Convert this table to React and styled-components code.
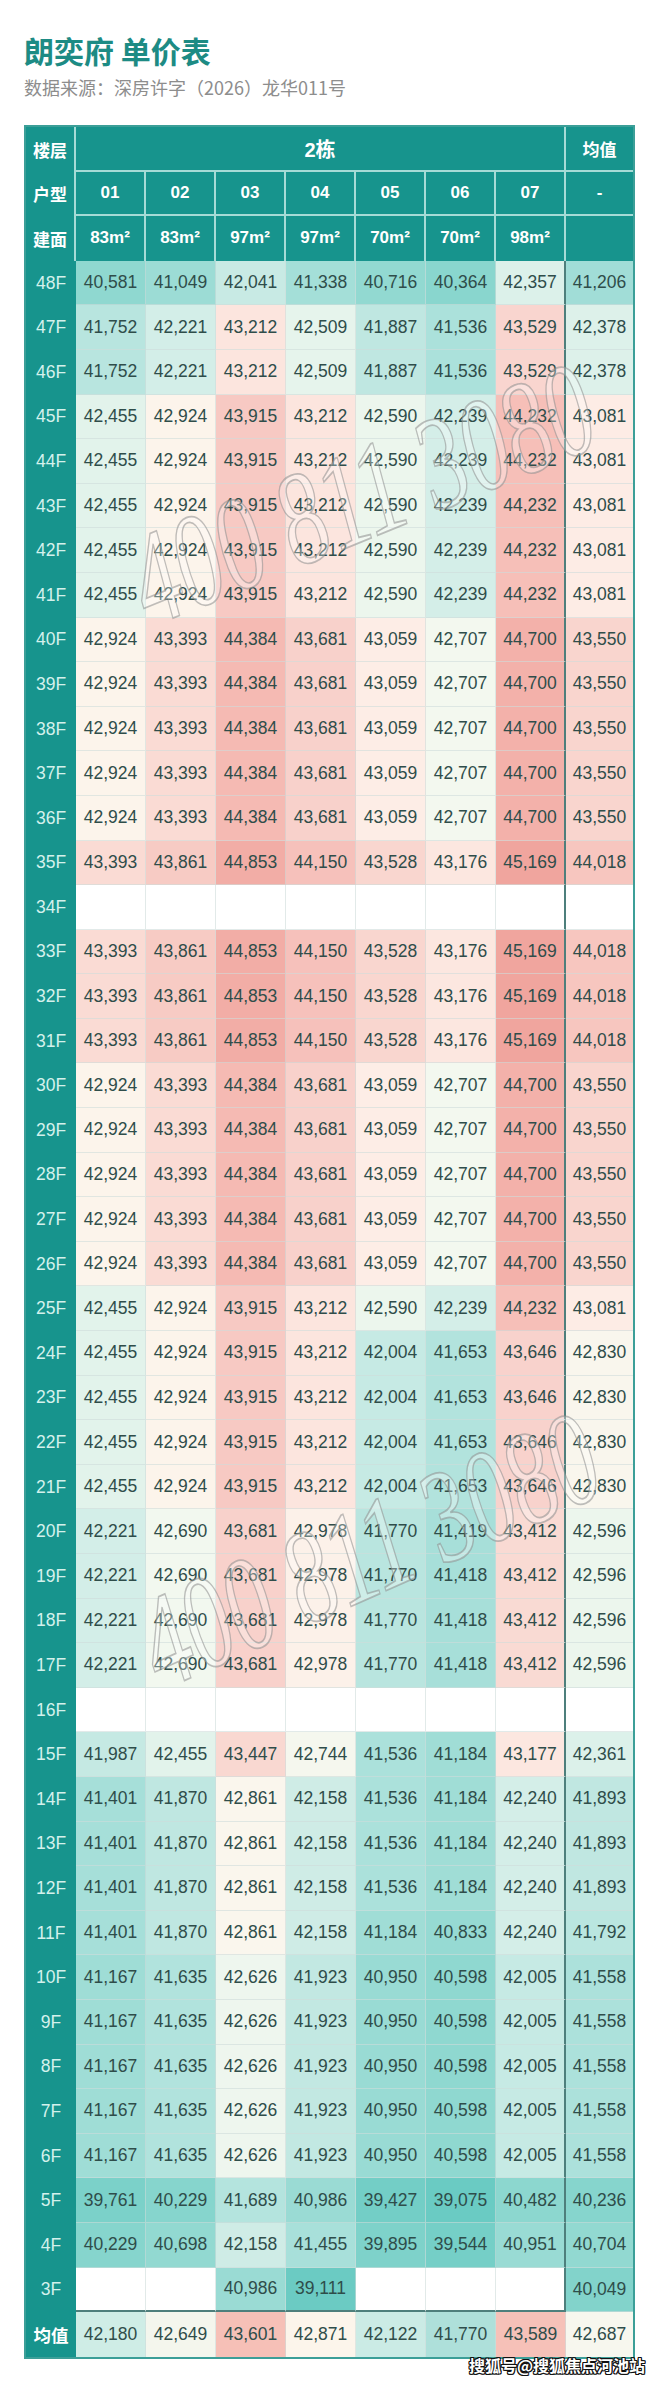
import styled, { createGlobalStyle } from 'styled-components';

// --- colour scale (value -> cell colour) ---
const MAIN_STOPS = [
  [39075, '#6acbc3'],
  [40600, '#8fd8d0'],
  [41500, '#a9e0da'],
  [42240, '#d4eee8'],
  [42700, '#f3f8ef'],
  [42900, '#fcf5ec'],
  [43100, '#fdebe4'],
  [43450, '#f9d8d1'],
  [43700, '#f8d0ca'],
  [44400, '#f5b9b2'],
  [44700, '#f3b1aa'],
  [45169, '#f0a59e'],
];

const AVG_STOPS = [
  [41770, '#aee0da'],
  [42150, '#cdece6'],
  [42700, '#f8f7ee'],
  [42900, '#fdf5eb'],
  [43601, '#f6c0b7'],
];

const hex = (h) => [1, 3, 5].map((i) => parseInt(h.slice(i, i + 2), 16));

const scale = (v, stops) => {
  if (v <= stops[0][0]) return stops[0][1];
  for (let i = 1; i < stops.length; i++) {
    const [v1, c1] = stops[i];
    if (v <= v1) {
      const [v0, c0] = stops[i - 1];
      const t = (v - v0) / (v1 - v0);
      const a = hex(c0);
      const b = hex(c1);
      return `rgb(${a.map((x, k) => Math.round(x + (b[k] - x) * t)).join(',')})`;
    }
  }
  return stops[stops.length - 1][1];
};

// --- data ---
const R47 = [[41752, 42221, 43212, 42509, 41887, 41536, 43529], 42378];
const R45 = [[42455, 42924, 43915, 43212, 42590, 42239, 44232], 43081];
const R40 = [[42924, 43393, 44384, 43681, 43059, 42707, 44700], 43550];
const R35 = [[43393, 43861, 44853, 44150, 43528, 43176, 45169], 44018];
const R24 = [[42455, 42924, 43915, 43212, 42004, 41653, 43646], 42830];
const R20 = [[42221, 42690, 43681, 42978, 41770, 41418, 43412], 42596];
const R14 = [[41401, 41870, 42861, 42158, 41536, 41184, 42240], 41893];
const R10 = [[41167, 41635, 42626, 41923, 40950, 40598, 42005], 41558];
const EMPTY = [null, null];

const floors = [
  [48, [[40581, 41049, 42041, 41338, 40716, 40364, 42357], 41206]],
  [47, R47], [46, R47],
  [45, R45], [44, R45], [43, R45], [42, R45], [41, R45],
  [40, R40], [39, R40], [38, R40], [37, R40], [36, R40],
  [35, R35], [34, EMPTY], [33, R35], [32, R35], [31, R35],
  [30, R40], [29, R40], [28, R40], [27, R40], [26, R40],
  [25, R45],
  [24, R24], [23, R24], [22, R24], [21, R24],
  [20, [[42221, 42690, 43681, 42978, 41770, 41419, 43412], 42596]],
  [19, R20], [18, R20], [17, R20],
  [16, EMPTY],
  [15, [[41987, 42455, 43447, 42744, 41536, 41184, 43177], 42361]],
  [14, R14], [13, R14], [12, R14],
  [11, [[41401, 41870, 42861, 42158, 41184, 40833, 42240], 41792]],
  [10, R10], [9, R10], [8, R10], [7, R10], [6, R10],
  [5, [[39761, 40229, 41689, 40986, 39427, 39075, 40482], 40236]],
  [4, [[40229, 40698, 42158, 41455, 39895, 39544, 40951], 40704]],
  [3, [[null, null, 40986, 39111, null, null, null], 40049]],
];

const totals = [[42180, 42649, 43601, 42871, 42122, 41770, 43589], 42687];

const units = ['01', '02', '03', '04', '05', '06', '07'];
const areas = ['83m²', '83m²', '97m²', '97m²', '70m²', '70m²', '98m²'];

const fmt = (n) => n.toLocaleString('en-US');

// --- styles ---
const GlobalStyle = createGlobalStyle`
  html, body {
    margin: 0;
    padding: 0;
    background: #fff;
  }
  body {
    font-family: "Liberation Sans", "Noto Sans CJK SC", sans-serif;
  }
`;

const Page = styled.div`
  position: relative;
  width: 660px;
  height: 2384px;
  box-sizing: border-box;
  padding: 32px 0 0 24px;
  overflow: hidden;
  background: #fff;
`;

const Title = styled.h1`
  margin: 0;
  font-family: "Noto Sans CJK SC", sans-serif;
  font-size: 30px;
  line-height: 36px;
  font-weight: 700;
  color: #1d8b84;
`;

const Source = styled.p`
  margin: 7px 0 0;
  font-family: "Noto Sans CJK SC", sans-serif;
  font-size: 18px;
  line-height: 24px;
  color: #8d8d8d;
`;

const Sheet = styled.div`
  margin-top: 26px;
  width: 611px;
  box-sizing: border-box;
  border: 2px solid #3c9f98;
  display: grid;
  grid-template-columns: 50px repeat(7, 70px) 67px;
  grid-auto-rows: 44.6px;
  background: #fff;
`;

const LINE = '2px solid #a6dbd6';

const Head = styled.div`
  grid-column: ${(p) => (p.$span ? `span ${p.$span}` : 'auto')};
  display: flex;
  align-items: center;
  justify-content: center;
  box-sizing: border-box;
  background: #17948d;
  color: #fff;
  font-family: "Liberation Sans", "Noto Sans CJK SC", sans-serif;
  font-weight: 700;
  font-size: ${(p) => (p.$big ? 20 : 17)}px;
  border-right: ${(p) => (p.$open ? 'none' : LINE)};
  border-bottom: ${(p) => (p.$under ? LINE : 'none')};
`;

const Floor = styled.div`
  display: flex;
  align-items: center;
  justify-content: center;
  background: #17948d;
  color: ${(p) => (p.$strong ? '#fff' : '#d4f1ec')};
  font-weight: ${(p) => (p.$strong ? 700 : 400)};
  font-size: 17.5px;
`;

const GRID = '1px solid rgba(206, 220, 218, 0.6)';
const DARK = '2px solid #4e7f7c';

const Cell = styled.div`
  display: flex;
  align-items: center;
  justify-content: center;
  box-sizing: border-box;
  background: ${(p) => p.$bg};
  color: #2f4d4a;
  font-size: 17.5px;
  border-right: ${(p) => (p.$divide ? DARK : p.$end ? 'none' : GRID)};
  border-bottom: ${(p) => (p.$close ? DARK : p.$bottom ? 'none' : GRID)};
`;

const Stamp = styled.div`
  position: absolute;
  left: ${(p) => p.$x}px;
  top: ${(p) => p.$y}px;
  transform: translate(-50%, -50%) rotate(${(p) => p.$angle}deg) scale(0.92, 1.35);
  font-family: "Liberation Serif", serif;
  font-style: italic;
  font-size: 98px;
  line-height: 1;
  white-space: nowrap;
  color: rgba(255, 255, 255, 0.3);
  -webkit-text-stroke: 1.3px rgba(140, 140, 140, 0.55);
  pointer-events: none;
`;

const Credit = styled.div`
  position: absolute;
  right: 15px;
  top: 2354px;
  font-family: "Noto Sans CJK SC", sans-serif;
  font-weight: 700;
  font-size: 16px;
  line-height: 22px;
  color: #fff;
  text-shadow:
    1px 1px 0 #111, -1px -1px 0 #111, 1px -1px 0 #111, -1px 1px 0 #111,
    0 1px 0 #111, 1px 0 0 #111, 0 -1px 0 #111, -1px 0 0 #111;
`;

const PriceRow = ({ label, values, avg, last, strong, stops }) => (
  <>
    <Floor $strong={strong}>{label}</Floor>
    {(values || Array(7).fill(null)).map((v, i) => (
      <Cell
        key={i}
        $bg={v == null ? '#fff' : scale(v, stops)}
        $divide={i === 6 && !strong}
        $close={last}
        $bottom={strong}
      >
        {v == null ? '' : fmt(v)}
      </Cell>
    ))}
    <Cell $bg={avg == null ? '#fff' : scale(avg, stops)} $end $bottom={strong}>
      {avg == null ? '' : fmt(avg)}
    </Cell>
  </>
);

export default function App() {
  return (
    <Page>
      <GlobalStyle />
      <Title>朗奕府 单价表</Title>
      <Source>数据来源：深房许字（2026）龙华011号</Source>

      <Sheet>
        <Head>楼层</Head>
        <Head $span={7} $big $under>2栋</Head>
        <Head $open $under>均值</Head>

        <Head>户型</Head>
        {units.map((u) => (
          <Head key={u} $under>{u}</Head>
        ))}
        <Head $open $under>-</Head>

        <Head>建面</Head>
        {areas.map((a, i) => (
          <Head key={i}>{a}</Head>
        ))}
        <Head $open />

        {floors.map(([f, [values, avg]]) => (
          <PriceRow
            key={f}
            label={`${f}F`}
            values={values}
            avg={avg}
            last={f === 3}
            stops={MAIN_STOPS}
          />
        ))}

        <PriceRow label="均值" values={totals[0]} avg={totals[1]} strong stops={AVG_STOPS} />
      </Sheet>

      <Stamp $x={361} $y={494} $angle={-22}>400 811 3080</Stamp>
      <Stamp $x={368} $y={1550} $angle={-24}>400 811 3080</Stamp>
      <Credit>搜狐号@搜狐焦点河池站</Credit>
    </Page>
  );
}
